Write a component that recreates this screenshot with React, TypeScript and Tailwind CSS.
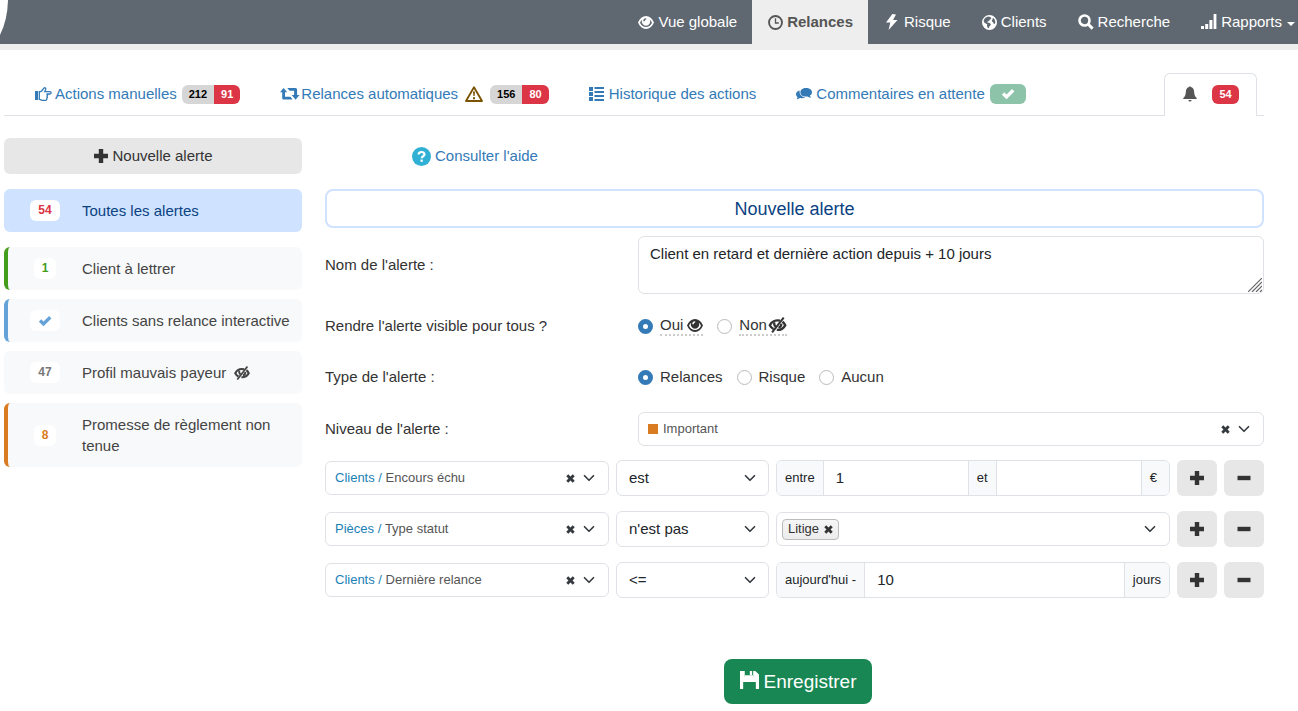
import React, { useState } from 'react';

type IconProps = { className?: string };

const Svg: React.FC<{ className?: string, box?: string, children: React.ReactNode }> = ({ className = 'size-4', box = '0 0 16 16', children }) => (
    <svg className={`shrink-0 ${className}`} viewBox={box} fill="currentColor" aria-hidden="true">{children}</svg>
);

const EyeIcon: React.FC<IconProps> = ({ className = 'h-[13px] w-4' }) => (
    <Svg className={className} box="0 0 16 13">
        <path fillRule="evenodd" d="M0 6.5C1.700 2.200 4.600 0 8 0s6.300 2.200 8 6.500c-1.700 4.300-4.600 6.500-8 6.500S1.700 10.800 0 6.500ZM2 6.800C3.400 9.700 5.500 11 8 11s4.600-1.300 6-4.200c-.7-1.500-1.300-2.400-2.200-3.100A4.200 4.200 0 1 1 4.200 3.700C3.300 4.400 2.700 5.300 2 6.800ZM5.300 5.300A2.900 2.900 0 0 1 8.200 2.200V3.600A1.700 1.700 0 0 0 6.700 5.300Z" />
    </Svg>
);

const EyeOffIcon: React.FC<IconProps> = ({ className }) => (
    <Svg className={className} box="0 0 18 16">
        <g fill="none" stroke="currentColor">
            <path strokeWidth="2.400" d="M11.500 3.700C7 2.700 3 4.800 1.300 8.300c.9 1.700 2.100 2.900 3.700 3.700" />
            <path strokeWidth="2.400" d="M14 4.800c1.200.9 2.100 2.100 2.700 3.500-1.700 3.100-4.700 4.800-8.400 4.600" />
            <path strokeWidth="2.200" d="M5.900 5.200c-.6 2 .1 3.400 1.300 4.400M12.800 6.600c.2 1.900-.9 3.500-2.800 4.100" />
            <path strokeWidth="2" d="M3.600 15.400 15.200.6" />
        </g>
    </Svg>
);

const ClockIcon = () => (
    <Svg className="size-[15px]">
        <g fill="none" stroke="currentColor">
            <circle cx="8" cy="8" r="6.9" strokeWidth="2" />
            <path strokeWidth="1.4" d="M8 3.5V8.5H11.5" />
        </g>
    </Svg>
);

const BoltIcon = () => (
    <Svg><path d="M8.400 0 2 8.600h4.300L4.600 16l8.900-10H9L12 .6Z" /></Svg>
);

const GlobeIcon = () => (
    <Svg className="size-[15px]">
        <path fillRule="evenodd" d="M8 0a8 8 0 1 1 0 16A8 8 0 0 1 8 0ZM8.600 2 10 3.300 9.400 4.600 8 5 7.600 6.500 6 6.800 5.600 8l2 .3 1.800 1.200-.3 1.500-1.300 1.300L7.200 14.200 6 13.700l-.7-2.600.3-1.200L4 9 2.600 8.200 1.700 6C2.600 3.600 4.400 2 6.800 1.700ZM12 3.200l1.600 1.900.7 2.500-.9 1.900-1-.3-.4-1.600-1.300-.6-.2-1.400 1-1-.5-.9Z" />
    </Svg>
);

const SearchIcon = () => (
    <Svg>
        <circle cx="6.5" cy="6.5" r="5" fill="none" stroke="currentColor" strokeWidth="2.6" />
        <path d="m9.300 11.300 2-2 4.400 4.200-2.200 2.200Z" />
    </Svg>
);

const SignalIcon = () => (
    <Svg><path d="M0 12h3v3H0ZM4.200 10h3v5h-3ZM8.400 6h3v9h-3ZM12.600 0h2.800v15h-2.800Z" /></Svg>
);

const HandIcon = () => (
    <Svg className="h-[15px] w-[17px]" box="0 0 17 15">
        <path d="M0 4h3v9H0Z" />
        <path fill="none" stroke="currentColor" strokeWidth="1.3" d="M4.3 4.6h1.400C7 4.200 7.800 2.400 9 1.100c1-.8 2.100.2 1.700 1.300L9.700 4.700h5.100c1.800 0 1.800 2.300 0 2.300h-3.300c1.500.2 1.400 2.100 0 2.200 1.300.3 1.100 2-.2 2.100.9.4.6 2-.6 2H7.200c-1-.2-1.700-.9-2.900-.9Z" />
    </Svg>
);

const RetweetIcon = () => (
    <Svg className="h-3.5 w-5" box="0 0 20 14">
        <path d="M3.600 1 7.200 5.200H5v4.600h5.400l2.200 2.800H3.500q-1.300 0-1.300-1.300V5.200H0Z" />
        <path d="M7.300 1h8.200q1.600 0 1.600 1.600V8h2.400l-3.900 4.800L11.700 8h2.400V3.800H9.500Z" />
    </Svg>
);

const WarningIcon = () => (
    <Svg className="h-4 w-[18px] text-[#7a5200]" box="0 0 18 16">
        <path fill="none" stroke="currentColor" strokeWidth="1.8" strokeLinejoin="round" d="M9 1.2 17 15H1Z" />
        <path d="M8 5.5h2l-.4 4.6H8.400ZM8 11.2h2v2H8Z" />
    </Svg>
);

const ListIcon = () => (
    <Svg className="h-3.5 w-[15px]" box="0 0 15 14">
        <path d="M0 0h4v4H0ZM0 5h4v4H0ZM0 10h4v4H0ZM5.500 0H15v2H5.500ZM5.500 4H15v2H5.500ZM5.500 8H15v2H5.500ZM5.500 12H15v2H5.500Z" />
    </Svg>
);

const CommentsIcon = () => (
    <Svg className="h-3 w-4" box="0 0 16 12">
        <path d="M10 0c3.600 0 6 1.800 6 4.200 0 1.500-.8 2.700-2.100 3.400l1 2.400-3.600-1.600C7 8.900 4.400 7 4.400 4.400 4.400 1.800 6.800 0 10 0Z" />
        <path d="M3.600 2.400C1.300 3 0 4.400 0 6.200c0 1.100.6 2.100 1.500 2.800L.9 11.600l3.200-1.500c1.800.4 3.800 0 5.100-.9C5.700 8.900 3.100 6.500 3.600 2.400Z" />
    </Svg>
);

const BellIcon = () => (
    <Svg><path d="M7.200 1a.8.8 0 0 1 1.600 0c2 .4 3.100 2 3.300 4.500.2 3.200.6 4.600 2.600 6.500v1H1.300v-1c2-1.900 2.400-3.300 2.600-6.500C4.100 3 5.200 1.400 7.200 1ZM6.400 14h3.200a1.600 1.600 0 0 1-3.200 0Z" /></Svg>
);

const CheckIcon: React.FC<IconProps> = ({ className }) => (
    <Svg className={className}><path d="m1 8.800 2.700-2.700 2.600 2.600L12.700 2.300 15.300 5 6.300 14Z" /></Svg>
);

const PlusIcon = () => (
    <Svg><path d="M5.800 1h4.400v4.800H15v4.400h-4.800V15H5.800v-4.800H1V5.800h4.800Z" /></Svg>
);

const MinusIcon = () => (
    <Svg><path d="M1.500 5.800h13v4.400h-13Z" /></Svg>
);

const CrossIcon: React.FC<IconProps> = ({ className = 'size-[9px]' }) => (
    <Svg className={className}><path d="M4 .5 8 4.400 12 .5 15.500 4 11.600 8l3.900 4-3.500 3.500L8 11.600l-4 3.900L.5 12 4.400 8 .5 4Z" /></Svg>
);

const ChevronIcon = () => (
    <Svg className="size-3"><path fill="none" stroke="currentColor" strokeWidth="2.200" strokeLinecap="round" strokeLinejoin="round" d="m2 5 6 6 6-6" /></Svg>
);

const HelpIcon = () => (
    <Svg className="size-[19px]" box="0 0 19 19">
        <circle cx="9.500" cy="9.500" r="9.500" fill="#31b0d5" />
        <path fill="none" stroke="#fff" strokeWidth="2.200" d="M6.600 7.600C6.600 4.200 12.500 4.200 12.500 7.300c0 2-2.800 1.900-2.800 4" />
        <path fill="#fff" d="M8.500 12.600h2.300v2.200H8.500Z" />
    </Svg>
);

const SaveIcon = () => (
    <Svg className="h-[18px] w-[19px]" box="0 0 18 17">
        <path fillRule="evenodd" d="M0 0h4.500v5.500h8V0h2L18 3.200V17h-3v-6.500H3V17H0ZM9.300 0h2.200v4H9.300Z" />
        <path d="M4.500 4h8v2h-8Z" />
    </Svg>
);

const NavLink: React.FC<{ icon: React.ReactNode, label: string, active?: boolean, caret?: boolean }> = ({ icon, label, active, caret }) => (
    <a
        href="#"
        className={`flex h-11 items-center gap-1 whitespace-nowrap pl-4 ${caret ? 'pr-[3px]' : 'pr-[15px]'} ${active ? 'bg-[#eee] font-bold text-[#555]' : 'text-white'}`}
    >
        {icon}
        {label}
        {caret && <span className="ml-px mt-1 border-x-4 border-t-4 border-x-transparent border-t-white" />}
    </a>
);

const CountPair: React.FC<{ total: number, late: number }> = ({ total, late }) => (
    <span className="flex overflow-hidden rounded-md text-[11px] leading-[19px] font-bold">
        <span className="bg-[#d6d6d6] px-[7px] text-black">{total}</span>
        <span className="bg-[#dc3545] px-[7px] text-white">{late}</span>
    </span>
);

interface Alert {
    label: string;
    count: number | null;
    item: string;
    badge: string;
    hidden?: boolean;
}

const alerts: Alert[] = [
    { label: 'Client à lettrer', count: 1, item: 'border-[#449d1b]', badge: 'text-[#449d1b]' },
    { label: 'Clients sans relance interactive', count: null, item: 'border-[#64a2d8]', badge: 'text-[#64a2d8]' },
    { label: 'Profil mauvais payeur', count: 47, item: 'border-transparent', badge: 'text-[#777]', hidden: true },
    { label: 'Promesse de règlement non tenue', count: 8, item: 'border-[#d97b20]', badge: 'text-[#d97b20]' },
];

const AlertBadge: React.FC<{ count: number | null, color: string }> = ({ count, color }) => (
    <span className="flex w-[74px] shrink-0 justify-center">
        <span className={`flex h-[21px] items-center rounded-md bg-white px-2 text-[12px] font-bold ${color}`}>
            {count === null ? <CheckIcon className="size-3.5" /> : count}
        </span>
    </span>
);

const Sidebar = () => (
    <aside className="w-[298px] shrink-0">
        <button type="button" className="flex h-9 w-full items-center justify-center gap-[3px] rounded-md bg-[#e7e7e7] text-[#333]">
            <PlusIcon />
            Nouvelle alerte
        </button>
        <a href="#" className="mt-[15px] mb-[15px] flex items-center rounded-md border-l-4 border-transparent bg-[#cfe2ff] py-[11px] leading-[21px] text-[#0a4282]">
            <AlertBadge count={54} color="text-[#dc3545]" />
            Toutes les alertes
        </a>
        <div className="flex flex-col gap-[9px]">
            {alerts.map(alert => (
                <a key={alert.label} href="#" className={`flex items-center rounded-md border-l-4 bg-[#f8f9fa] py-[11px] pr-1 leading-[21px] text-[#444] ${alert.item}`}>
                    <AlertBadge count={alert.count} color={alert.badge} />
                    <span>{alert.label}</span>
                    {alert.hidden && <EyeOffIcon className="ml-2 h-3.5 w-4" />}
                </a>
            ))}
        </div>
    </aside>
);

const ClearButton: React.FC<{ label: string }> = ({ label }) => (
    <button type="button" aria-label={label} className="relative z-10 flex size-[17px] items-center justify-center text-[#343a40]">
        <CrossIcon />
    </button>
);

/* Rich value shown under a native select that takes the clicks */
const RichSelect: React.FC<{ id?: string, label: string, value: string, options: string[], className: string, children: React.ReactNode, clearable?: boolean }> = ({ id, label, value, options, className, children, clearable }) => (
    <div className={`relative flex h-[34px] items-center rounded-md border border-[#dee2e6] bg-white pr-[13px] text-[13px] text-[#555] ${className}`}>
        <div className="flex grow items-center">{children}</div>
        {clearable && <ClearButton label={`Effacer ${label}`} />}
        <span className="ml-1 text-[#343a40]"><ChevronIcon /></span>
        <select id={id} aria-label={id ? undefined : label} defaultValue={value} className="absolute inset-0 w-full cursor-pointer opacity-0">
            {options.map(option => <option key={option}>{option}</option>)}
        </select>
    </div>
);

const OperatorSelect: React.FC<{ value: string, options: string[] }> = ({ value, options }) => (
    <div className="relative w-[153px] shrink-0">
        <select aria-label="Opérateur" defaultValue={value} className="h-9 w-full appearance-none rounded-md border border-[#dee2e6] bg-white pr-8 pl-3 text-[#212529]">
            {options.map(option => <option key={option}>{option}</option>)}
        </select>
        <span className="pointer-events-none absolute inset-y-0 right-[13px] flex items-center text-[#343a40]"><ChevronIcon /></span>
    </div>
);

const Addon: React.FC<{ className?: string, children: React.ReactNode }> = ({ className = 'px-2', children }) => (
    <span className={`flex shrink-0 items-center bg-[#f8f9fa] text-[13px] ${className}`}>{children}</span>
);

const InputGroup: React.FC<{ children: React.ReactNode }> = ({ children }) => (
    <div className="flex h-9 min-w-0 grow divide-x divide-[#dee2e6] overflow-hidden rounded-md border border-[#dee2e6] text-[#212529]">{children}</div>
);

const ConditionRow: React.FC<{ group: string, field: string, operator: string, operators: string[], children: React.ReactNode }> = ({ group, field, operator, operators, children }) => (
    <div className="flex items-center gap-[7px]">
        <RichSelect label="Critère" value={`${group} / ${field}`} options={[`${group} / ${field}`]} className="w-[284px] shrink-0 pl-[9px]" clearable>
            <span className="text-[#1a7fb5]">{group} /</span>&nbsp;{field}
        </RichSelect>
        <OperatorSelect value={operator} options={operators} />
        {children}
        <button type="button" aria-label="Ajouter une condition" className="flex h-9 w-10 shrink-0 items-center justify-center rounded-md bg-[#e7e7e7] text-[#333]">
            <PlusIcon />
        </button>
        <button type="button" aria-label="Supprimer la condition" className="flex h-9 w-10 shrink-0 items-center justify-center rounded-md bg-[#e7e7e7] text-[#333]">
            <MinusIcon />
        </button>
    </div>
);

const Radio: React.FC<{ name: string, checked: boolean, onChange: () => void, children: React.ReactNode }> = ({ name, checked, onChange, children }) => (
    <label className="flex items-center gap-[7px]">
        <input
            type="radio"
            name={name}
            checked={checked}
            onChange={onChange}
            className="size-[15px] appearance-none rounded-full border border-[#bbb] bg-white checked:border-[5px] checked:border-[#337ab7]"
        />
        {children}
    </label>
);

const AlertForm = () => {
    const [visible, setVisible] = useState(true);
    const [kind, setKind] = useState('Relances');

    return (
        <form className="min-w-0 grow text-[#333]" onSubmit={e => e.preventDefault()}>
            <a href="#" className="ml-[87px] flex h-9 w-fit items-center gap-1 text-[#337ab7]">
                <HelpIcon />
                Consulter l'aide
            </a>
            <h1 className="mt-[15px] flex h-[39px] items-center justify-center rounded-lg border-2 border-[#cfe2ff] text-[18px] text-[#0a4282]">Nouvelle alerte</h1>

            <div className="mt-2 flex items-center">
                <label htmlFor="alert-name" className="w-1/3">Nom de l'alerte :</label>
                <div className="relative w-2/3">
                    <textarea id="alert-name" defaultValue="Client en retard et dernière action depuis + 10 jours" className="block h-[58px] w-full resize-none rounded-md border border-[#dee2e6] px-[11px] py-[6px] leading-[22px] text-[#212529]" />
                    <svg className="pointer-events-none absolute right-[2px] bottom-[2px] size-3.5" viewBox="0 0 14 14" fill="none" stroke="#666" strokeWidth="1.200" aria-hidden="true">
                        <path d="M0 14 14 0M4 14 14 4M8 14l6-6M12 14l2-2" />
                    </svg>
                </div>
            </div>

            <div role="radiogroup" aria-labelledby="visible-label" className="mt-3.5 flex h-9 items-center">
                <span id="visible-label" className="w-1/3">Rendre l'alerte visible pour tous ?</span>
                <div className="flex w-2/3 gap-3.5">
                    <Radio name="visible" checked={visible} onChange={() => setVisible(true)}>
                        <span className="flex items-center gap-1 border-b-2 border-dotted border-[#ccc] leading-[18px]">Oui <EyeIcon /></span>
                    </Radio>
                    <Radio name="visible" checked={!visible} onChange={() => setVisible(false)}>
                        <span className="flex items-center border-b-2 border-dotted border-[#ccc] leading-[18px]">Non <EyeOffIcon className="ml-px h-4 w-[19px]" /></span>
                    </Radio>
                </div>
            </div>

            <div role="radiogroup" aria-labelledby="kind-label" className="mt-[15px] flex h-9 items-center">
                <span id="kind-label" className="w-1/3">Type de l'alerte :</span>
                <div className="flex w-2/3 gap-3.5">
                    {['Relances', 'Risque', 'Aucun'].map(value => (
                        <Radio key={value} name="kind" checked={kind === value} onChange={() => setKind(value)}>{value}</Radio>
                    ))}
                </div>
            </div>

            <div className="mt-[17px] flex items-center">
                <label htmlFor="alert-level" className="w-1/3">Niveau de l'alerte :</label>
                <RichSelect id="alert-level" label="le niveau" value="Important" options={['Important', 'Normal']} className="w-2/3 pl-[9px]" clearable>
                    <span className="mr-[5px] size-2.5 bg-[#d97b20]" />
                    Important
                </RichSelect>
            </div>

            <div className="mt-3.5 flex flex-col gap-[15px]">
                <ConditionRow group="Clients" field="Encours échu" operator="est" operators={['est', "n'est pas"]}>
                    <InputGroup>
                        <Addon>entre</Addon>
                        <input type="text" aria-label="Montant minimum" defaultValue="1" className="w-0 grow px-3" />
                        <Addon>et</Addon>
                        <input type="text" aria-label="Montant maximum" className="w-0 grow px-3" />
                        <Addon className="pr-3 pl-2">€</Addon>
                    </InputGroup>
                </ConditionRow>
                <ConditionRow group="Pièces" field="Type statut" operator="n'est pas" operators={['est', "n'est pas"]}>
                    <RichSelect label="Statut" value="Litige" options={['Litige']} className="min-w-0 grow pl-[5px]">
                        <span className="flex h-[21px] items-center gap-[5px] rounded border border-[#bbb] bg-linear-to-b from-[#f6f6f6] to-[#ececec] px-[5px] text-[#333]">
                            Litige
                            <button type="button" aria-label="Retirer Litige" className="relative z-10"><CrossIcon /></button>
                        </span>
                    </RichSelect>
                </ConditionRow>
                <ConditionRow group="Clients" field="Dernière relance" operator="<=" operators={['<=', '>=']}>
                    <InputGroup>
                        <Addon>aujourd'hui -</Addon>
                        <input type="text" aria-label="Nombre de jours" defaultValue="10" className="w-0 grow px-3" />
                        <Addon>jours</Addon>
                    </InputGroup>
                </ConditionRow>
            </div>

            <div className="mt-[61px] flex justify-center pl-[7px]">
                <button type="submit" className="flex h-[45px] items-center gap-[5px] rounded-lg bg-[#198754] px-4 text-[19px] text-white">
                    <span className="pb-1"><SaveIcon /></span>
                    Enregistrer
                </button>
            </div>
        </form>
    );
};

const App: React.FC = () => (
    <div className="bg-white font-['Liberation_Sans',Arial,sans-serif] text-[15px] leading-[22px]">
        <header className="flex justify-between border-b-[6px] border-[#eee] bg-[#5f6871]">
            <svg className="h-9 w-2 shrink-0" viewBox="0 0 8 36" fill="#fff" aria-hidden="true"><path d="M0 0H8Q7.500 20 0 35Z" /></svg>
            <nav className="flex">
                <NavLink icon={<EyeIcon />} label="Vue globale" />
                <NavLink icon={<ClockIcon />} label="Relances" active />
                <NavLink icon={<BoltIcon />} label="Risque" />
                <NavLink icon={<GlobeIcon />} label="Clients" />
                <NavLink icon={<SearchIcon />} label="Recherche" />
                <NavLink icon={<SignalIcon />} label="Rapports" caret />
            </nav>
        </header>

        <div className="pt-[23px] pr-[34px] pb-2 pl-1">
            <nav className="flex h-[43px] items-center gap-10 border-b border-[#dee2e6] pr-[7px] pl-[31px] text-[#337ab7]">
                <a href="#" className="flex items-center gap-[5px] whitespace-nowrap">
                    <span className="flex items-center gap-[3px]"><HandIcon />Actions manuelles</span>
                    <CountPair total={212} late={91} />
                </a>
                <a href="#" className="flex items-center gap-[7px] whitespace-nowrap">
                    <span className="flex items-center gap-px"><RetweetIcon />Relances automatiques</span>
                    <WarningIcon />
                    <CountPair total={156} late={80} />
                </a>
                <a href="#" className="flex items-center gap-[5px] whitespace-nowrap">
                    <ListIcon />
                    Historique des actions
                </a>
                <a href="#" className="flex items-center gap-1 whitespace-nowrap">
                    <CommentsIcon />
                    Commentaires en attente
                    <span className="ml-px flex h-5 w-9 items-center justify-center rounded-md bg-[#8cc3a9] text-white"><CheckIcon className="size-3.5" /></span>
                </a>
                <a href="#" aria-label="Alertes" className="-mb-px ml-auto flex h-[43px] w-[93px] items-center justify-center gap-3.5 rounded-t-md border border-b-0 border-[#dee2e6] bg-white pb-0.5 text-[#555]">
                    <BellIcon />
                    <span className="rounded-md bg-[#dc3545] px-[7px] text-[11px] leading-[19px] font-bold text-white">54</span>
                </a>
            </nav>

            <div className="flex gap-[23px] pt-[22px]">
                <Sidebar />
                <AlertForm />
            </div>
        </div>
    </div>
);

export default App;
